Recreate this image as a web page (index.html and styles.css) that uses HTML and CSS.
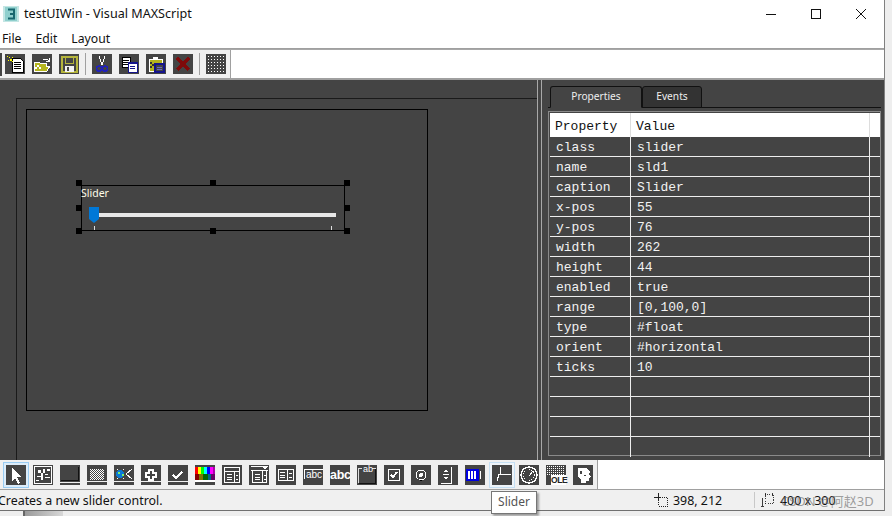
FILE: index.html
```html
<!DOCTYPE html>
<html lang="en">
<head>
    <meta charset="UTF-8">
    <meta name="viewport" content="width=device-width, initial-scale=1.0">
    <title>testUIWin - Visual MAXScript</title>
    <link rel="stylesheet" href="styles.css">
</head>
<body>
    <div class="window">
        <div class="titlebar">
            <svg class="app-icon" viewBox="0 0 16 16"><rect width="16" height="16" fill="#c4e6e4"/><rect x="2" y="1" width="12" height="14" fill="#8fcfcd"/><path d="M5 3.500h6v9H5M7 8h4" fill="none" stroke="#17666e" stroke-width="2"/></svg>
            <span class="title">testUIWin - Visual MAXScript</span>
            <div class="caption-btns">
                <svg viewBox="0 0 10 10"><path d="M0 5h10" stroke="#111" fill="none"/></svg>
                <svg viewBox="0 0 10 10"><rect x=".5" y=".5" width="9" height="9" stroke="#111" fill="none"/></svg>
                <svg viewBox="0 0 10 10" class="smooth"><path d="M0 0l10 10M10 0L0 10" stroke="#111" fill="none"/></svg>
            </div>
        </div>
        <div class="menubar">
            <span>File</span>
            <span>Edit</span>
            <span>Layout</span>
        </div>

        <div class="toolbar">
            <div class="tools top-tools">
                <span class="grip"></span>
                <svg class="tile" viewBox="0 0 20 20"><path d="M8 4h7l3 3v11H7V4z" fill="#fff" stroke="#000"/><path d="M9 8h7M9 10h7M9 12h7M9 14h7" stroke="#000"/><path d="M4 3h1v1H4zM7 3h1v1H7zM5 5h2v2H5zM3 6h1v1H3zM7 7h1v1H7zM2 2h1v1H2z" fill="#ff0"/></svg>
                <svg class="tile" viewBox="0 0 20 20"><path d="M2 17V8h5l1 1h6v3h4l-3 5z" fill="#b5b51e" stroke="#fff"/><path d="M3 13h2v2H3zM5 11h2v2H5zM7 13h2v2H7z" fill="#fff"/><path d="M11 5h4l2 2M17 4v3h-3" fill="none" stroke="#fff"/></svg>
                <svg class="tile" viewBox="0 0 20 20"><path d="M3 3h15v15H3z" fill="none" stroke="#b5b53c" stroke-width="2"/><path d="M6 3h8v6H6z" fill="none" stroke="#b5b53c"/><rect x="6" y="12" width="9" height="6" fill="#f4f4f4"/><rect x="8" y="13" width="2" height="4" fill="#444"/></svg>
                <span class="sep"></span>
                <svg class="tile" viewBox="0 0 20 20"><path d="M7 2l3 9M13 2l-3 9" stroke="#fff" fill="none"/><circle cx="7" cy="14.500" r="2.500" fill="none" stroke="#2222b8" stroke-width="1.500"/><circle cx="13" cy="14.500" r="2.500" fill="none" stroke="#2222b8" stroke-width="1.500"/></svg>
                <svg class="tile" viewBox="0 0 20 20"><path d="M3 3h8v10H3z" fill="#fff" stroke="#000"/><path d="M4 6h6M4 8h6M4 10h6" stroke="#000"/><path d="M9 8h9v10H9z" fill="#fff" stroke="#14148c"/><path d="M9 8h9v2H9z" fill="#14148c"/><path d="M11 12h5M11 14h5" stroke="#14148c"/></svg>
                <svg class="tile" viewBox="0 0 20 20"><path d="M3 5h13v12H3z" fill="#b5b51e" stroke="#fff"/><path d="M7 3h5v3H7z" fill="#fff"/><path d="M4 8h2v2H4zM6 10h2v2H6zM4 12h2v2H4z" fill="#333"/><path d="M9 10h9v8H9z" fill="#444" stroke="#14148c" stroke-width="2"/><path d="M11 13h5M11 15h5" stroke="#6c6cc0"/></svg>
                <svg class="tile" viewBox="0 0 20 20"><path d="M4 4l12 12M16 4L4 16" stroke="#7e0a0a" stroke-width="3" fill="none"/></svg>
                <span class="sep"></span>
                <svg class="tile dots" viewBox="0 0 20 20"><path d="M2 2h16M2 5h16M2 8h16M2 11h16M2 14h16M2 17h16" stroke="#fff" stroke-dasharray="1 2" fill="none"/></svg>
                <span class="sep last"></span>
            </div>
        </div>

        <div class="main">
            <div class="design">
                <div class="canvas">
                    <div class="form">
                        <div class="ctl">
                            <span class="ctl-label">Slider</span>
                            <span class="track"></span>
                            <svg class="thumb" viewBox="0 0 10 16"><path d="M0 0h10v12l-5 4-5-4z" fill="#0078d7"/></svg>
                            <span class="tick tick-a"></span>
                            <span class="tick tick-b"></span>
                            <i class="handle h-tl"></i>
                            <i class="handle h-tm"></i>
                            <i class="handle h-tr"></i>
                            <i class="handle h-ml"></i>
                            <i class="handle h-mr"></i>
                            <i class="handle h-bl"></i>
                            <i class="handle h-bm"></i>
                            <i class="handle h-br"></i>
                        </div>
                    </div>
                </div>
            </div>
            <div class="splitter"></div>
            <div class="side">
                <div class="tabs">
                    <span class="tab active">Properties</span>
                    <span class="tab">Events</span>
                </div>
                <div class="grid-box">
                    <table class="props">
                        <colgroup><col class="c1"><col class="c2"><col class="c3"></colgroup>
                        <thead><tr><th>Property</th><th>Value</th><th></th></tr></thead>
                        <tbody>
                            <tr><td>class</td><td>slider</td><td></td></tr>
                            <tr><td>name</td><td>sld1</td><td></td></tr>
                            <tr><td>caption</td><td>Slider</td><td></td></tr>
                            <tr><td>x-pos</td><td>55</td><td></td></tr>
                            <tr><td>y-pos</td><td>76</td><td></td></tr>
                            <tr><td>width</td><td>262</td><td></td></tr>
                            <tr><td>height</td><td>44</td><td></td></tr>
                            <tr><td>enabled</td><td>true</td><td></td></tr>
                            <tr><td>range</td><td>[0,100,0]</td><td></td></tr>
                            <tr><td>type</td><td>#float</td><td></td></tr>
                            <tr><td>orient</td><td>#horizontal</td><td></td></tr>
                            <tr><td>ticks</td><td>10</td><td></td></tr>
                            <tr><td></td><td></td><td></td></tr>
                            <tr><td></td><td></td><td></td></tr>
                            <tr><td></td><td></td><td></td></tr>
                            <tr class="end"><td></td><td></td><td></td></tr>
                        </tbody>
                    </table>
                </div>
            </div>
        </div>

        <div class="palette">
            <div class="tools bottom-tools">
                <span class="pick"><svg class="tile" viewBox="0 0 20 20"><path d="M6 2v14l3-3 3 6 2-1-3-6h4z" fill="#fff"/></svg></span>
                <svg class="tile" viewBox="0 0 20 20"><rect x="1.500" y="1.500" width="17" height="17" fill="none" stroke="#fff"/><path d="M5 5h3v3H5zM10 4h2v4h-2zM14 4h3v2h-3zM8 8h2v7H8zM4 11h4v1H4zM12 12h5v1h-5zM3 15h3v1H3zM12 9h3v1h-3z" fill="#fff"/></svg>
                <svg class="tile" viewBox="0 0 20 20"><path d="M1 15.500h18" stroke="#111"/><path d="M18.500 2v14" stroke="#111"/><path d="M0 17.500h20" stroke="#f0f0f0"/></svg>
                <svg class="tile" viewBox="0 0 20 20"><path d="M0 16.500h20" stroke="#f0f0f0"/><path d="M3 4h14M3 6h14M3 8h14M3 10h14M3 12h14M3 14h14" stroke="#fff" stroke-dasharray="1 1" fill="none"/><path d="M4 5h14M4 7h14M4 9h14M4 11h14M4 13h14" stroke="#fff" stroke-dasharray="1 1" fill="none"/></svg>
                <svg class="tile" viewBox="0 0 20 20"><path d="M0 16.500h20" stroke="#f0f0f0"/><circle cx="6" cy="9" r="4" fill="#0a7ad6"/><path d="M4 7h2v2H4zM8 9h2v2H8z" fill="#7cf06a"/><path d="M3 4l1 1M10 4l-1 1M3 14l1-1M10 14l-1-1" stroke="#fff"/><path d="M18 4l-6 5 6 5" stroke="#fff" fill="none"/></svg>
                <svg class="tile" viewBox="0 0 20 20"><path d="M0 16.500h20" stroke="#f0f0f0"/><path d="M8 5h4v3h3v4h-3v3H8v-3H5V8h3z" fill="none" stroke="#fff" stroke-width="1.500"/></svg>
                <svg class="tile" viewBox="0 0 20 20"><path d="M0 16.500h20" stroke="#f0f0f0"/><path d="M5 10l3 3 6-6" fill="none" stroke="#fff" stroke-width="2"/></svg>
                <svg class="tile" viewBox="0 0 20 20"><rect y="2" width="3" height="7" fill="#f00"/><rect x="3" y="2" width="3" height="7" fill="#ff0"/><rect x="6" y="2" width="3" height="7" fill="#0f0"/><rect x="9" y="2" width="3" height="7" fill="#0ff"/><rect x="12" y="2" width="3" height="7" fill="#00f"/><rect x="15" y="2" width="3" height="7" fill="#f0f"/><rect x="18" y="2" width="2" height="7" fill="#a0a"/><rect y="9" width="4" height="6" fill="#800"/><rect x="4" y="9" width="4" height="6" fill="#770"/><rect x="8" y="9" width="5" height="6" fill="#060"/><rect x="13" y="9" width="3" height="6" fill="#068"/><rect x="16" y="9" width="4" height="6" fill="#606"/><rect y="15" width="20" height="2" fill="#fff"/></svg>
                <svg class="tile" viewBox="0 0 20 20"><rect x="2.500" y="2.500" width="15" height="15" fill="none" stroke="#fff"/><path d="M3 6.500h14M12.500 7v10M5 9.500h5M5 12.500h5M5 14.500h5M14 10h2M14 14h2" stroke="#fff"/></svg>
                <svg class="tile" viewBox="0 0 20 20"><rect x="3.500" y="5.500" width="14" height="12" fill="none" stroke="#fff"/><path d="M2 1.500h17M2 5.500h17M13.500 6v11M6 9.500h5M6 12.500h5M6 14.500h5M15 10h2M15 14h2" stroke="#fff"/><path d="M14 2h4l-2 3z" fill="#fff"/></svg>
                <svg class="tile" viewBox="0 0 20 20"><rect x="2.500" y="4.500" width="15" height="11" fill="none" stroke="#fff"/><path d="M11.500 5v10M4 7.500h5M4 10.500h5M4 12.500h5M13 8h3M13 12h3" stroke="#fff"/></svg>
                <svg class="tile" viewBox="0 0 20 20"><path d="M1.500 14V4.500H20" fill="none" stroke="#fff"/><text class="tile-text" x="3" y="13" font-size="10">abc</text></svg>
                <span class="tile text-tile bold">abc</span>
                <svg class="tile" viewBox="0 0 20 20"><path d="M1.500 18V3.500H5M15 3.500h3.500" fill="none" stroke="#ddd"/><path d="M2 18.500h17M18.500 4v15" stroke="#111" fill="none"/><text class="tile-text" x="6" y="7" font-size="9">ab</text></svg>
                <svg class="tile" viewBox="0 0 20 20"><rect x="4.500" y="4.500" width="11" height="11" fill="none" stroke="#fff"/><path d="M7 10l2 2 4-5" fill="none" stroke="#fff" stroke-width="2"/></svg>
                <svg class="tile" viewBox="0 0 20 20"><circle cx="10" cy="10" r="5" fill="none" stroke="#fff"/><circle cx="10" cy="10" r="2" fill="#fff"/><path d="M6 14l3 2h3" stroke="#444"/></svg>
                <svg class="tile" viewBox="0 0 20 20"><path d="M13.500 2v16H3" stroke="#fff" fill="none"/><path d="M5.500 7L8 4l2.500 3zM5.500 12L8 15l2.500-3z" fill="#fff"/><path d="M5 9.500h6" stroke="#fff"/></svg>
                <svg class="tile" viewBox="0 0 20 20"><rect x="1" y="4" width="13" height="12" fill="#0000e0"/><path d="M4 6v8M7 6v8M10 6v8M15.500 6v8" stroke="#fff" stroke-width="1.500"/></svg>
                <span class="pick slider-pick"><svg class="tile" viewBox="0 0 20 20"><path d="M5 16l2-7h1V2M8 9h11" fill="none" stroke="#fff"/></svg></span>
                <svg class="tile" viewBox="0 0 20 20"><circle cx="10" cy="10" r="8" fill="none" stroke="#fff" stroke-width="1.500"/><circle cx="10" cy="10" r="5.500" fill="none" stroke="#fff" stroke-dasharray="1 1.500"/><path d="M10 11l4-5" stroke="#fff"/></svg>
                <span class="tile ole"><svg class="ole-dots" viewBox="0 0 20 10"><path d="M1 1h18M1 3h18M1 5h18M1 7h18M1 9h18" stroke="#fff" stroke-dasharray="1 1" fill="none"/></svg><span class="ole-text">OLE</span></span>
                <svg class="tile" viewBox="0 0 20 20"><path d="M5 3h9l3 4-1 2 2 3-2 1v3h-3v2H8v-3L5 12z" fill="#fff"/><path d="M7 6h2v3H7zM11 10h2v1h-2z" fill="#444"/></svg>
                <span class="sep last"></span>
            </div>
        </div>

        <div class="statusbar">
            <span class="status-msg">Creates a new slider control.</span>
            <div class="status-cell pos-cell">
                <svg class="st-icon" viewBox="0 0 14 14"><path d="M0 4.500h7M4.500 0v7" stroke="#222" fill="none"/><path d="M6 4.500h7.500v8.500H4.500V7" stroke="#222" stroke-dasharray="1 1" fill="none"/></svg>
                <span>398, 212</span>
            </div>
            <div class="status-cell size-cell">
                <svg class="st-icon" viewBox="0 0 14 16"><path d="M5 1.500h9V12H5z" stroke="#222" stroke-dasharray="1 1" fill="none"/><path d="M1.500 6v9M0 15.500h4M5 .5v3M13.500 0v3" stroke="#222" fill="none"/></svg>
                <span>400 x 300</span>
            </div>
        </div>
        <span class="watermark">CSDN @阿赵3D</span>
        <span class="tooltip">Slider</span>
    </div>
    <div class="under">
        <span class="under-a"></span>
        <span class="under-b"></span>
        <span class="under-c"></span>
    </div>
</body>
</html>
```

FILE: styles.css
```css
* {
    box-sizing: border-box;
}

html, body {
    margin: 0;
    height: 100%;
    overflow: hidden;
}

body {
    width: 892px;
    height: 516px;
    background: #eeeeee;
    font-family: "Noto Sans", "Open Sans", sans-serif;
    color: #111;
}

.window {
    position: relative;
    width: 885px;
    height: 511px;
    background: #fff;
    border-right: 1px solid #808080;
    border-bottom: 1px solid #707070;
    display: flex;
    flex-direction: column;
}

.titlebar {
    display: flex;
    align-items: center;
    height: 28px;
    padding: 0 0 1px 3px;
}

.app-icon {
    width: 16px;
    height: 16px;
    margin-right: 5px;
}

.title {
    font-size: 12.6px;
}

.caption-btns {
    margin-left: auto;
    display: flex;
    align-items: center;
    gap: 35px;
    padding-right: 18px;
}

.caption-btns svg {
    width: 10px;
    height: 10px;
    shape-rendering: crispEdges;
}

.caption-btns svg.smooth {
    shape-rendering: auto;
}

.menubar {
    display: flex;
    gap: 14px;
    height: 21px;
    padding-left: 2px;
    font-size: 12.2px;
    line-height: 22px;
    border-bottom: 1px solid #a0a0a0;
}

.toolbar {
    height: 31px;
    border-top: 1px solid #a8a8a8;
    border-bottom: 2px solid #a0a0a0;
    background: #fff;
}

.tools {
    display: inline-flex;
    align-items: center;
    height: 100%;
    background: #f0f0f0;
    gap: 7px;
}

.tile {
    display: block;
    flex: none;
    width: 20px;
    height: 20px;
    background: #444;
    shape-rendering: crispEdges;
}

.tile-text {
    fill: #fff;
    font-family: "Liberation Sans", sans-serif;
}

.grip {
    width: 2px;
    height: 23px;
    margin-right: -4px;
    background: #444;
}

.sep {
    width: 1px;
    height: 22px;
    background: #a0a0a0;
    margin: 0 -1px;
}

.sep.last {
    margin: 0 0 0 -3px;
    height: 100%;
}

.main {
    display: flex;
    height: 380px;
    background: #444;
}

.design {
    width: 537px;
    padding-top: 18px;
}

.canvas {
    height: 100%;
    margin-left: 16px;
    padding: 10px 0 0 9px;
    border-top: 1px solid #1a1a1a;
    border-left: 1px solid #1a1a1a;
}

.form {
    position: relative;
    width: 402px;
    height: 302px;
    border: 1px solid #000;
}

/* control sits at its x-pos / y-pos inside the form */
.ctl {
    position: absolute;
    left: 54px;
    top: 75px;
    width: 264px;
    height: 46px;
    border: 1px solid #000;
}

.ctl-label {
    position: absolute;
    left: -1px;
    top: 0;
    font-size: 10.5px;
    line-height: 14px;
    color: #fffde8;
}

.track {
    position: absolute;
    left: 17px;
    top: 27px;
    width: 237px;
    height: 4px;
    background: #e8e8e8;
}

.thumb {
    position: absolute;
    left: 7px;
    top: 21px;
    width: 10px;
    height: 16px;
}

.tick {
    position: absolute;
    top: 40px;
    width: 1px;
    height: 4px;
    background: #ddd;
}

.tick-a {
    left: 12px;
}

.tick-b {
    left: 249px;
}

.handle {
    position: absolute;
    width: 6px;
    height: 6px;
    background: #000;
}

.h-tl { left: -6px; top: -6px; }
.h-tm { left: 128px; top: -6px; }
.h-tr { left: 262px; top: -6px; }
.h-ml { left: -6px; top: 19px; }
.h-mr { left: 262px; top: 19px; }
.h-bl { left: -6px; top: 42px; }
.h-bm { left: 128px; top: 42px; }
.h-br { left: 262px; top: 42px; }

.splitter {
    width: 5px;
    border-left: 1px solid #a8a8a8;
    border-right: 1px solid #a8a8a8;
}

.side {
    flex: 1;
    padding: 6px 3px 3px 6px;
}

.tabs {
    display: flex;
    height: 22px;
    padding-left: 2px;
    border-bottom: 1px solid #111;
}

.tab {
    width: 60px;
    height: 22px;
    border: 1px solid #111;
    border-radius: 3px 3px 0 0;
    background: #333;
    color: #eee;
    font-size: 10.2px;
    line-height: 19px;
    text-align: center;
}

.tab.active {
    width: 92px;
    background: #444;
    border-bottom-color: #444;
}

.grid-box {
    width: 333px;
    height: 345px;
    margin-top: 3px;
    padding: 1px;
    border: 1px solid #8a8a8a;
}

.props {
    width: 330px;
    table-layout: fixed;
    border-collapse: separate;
    border-spacing: 0;
    font-family: "Liberation Mono", monospace;
    font-size: 13px;
    color: #f2f2f2;
}

.c1 {
    width: 81px;
}

.c3 {
    width: 10px;
}

.props th {
    height: 24px;
    padding: 2px 0 0 5px;
    background: #fff;
    color: #111;
    font-weight: normal;
    text-align: left;
    border-right: 1px solid #ddd;
}

.props td {
    height: 20px;
    padding: 3px 0 0 6px;
    line-height: 16px;
    border-bottom: 1px solid #eee;
    border-right: 1px solid #eee;
}

.props th:last-child,
.props td:last-child {
    border-right: none;
}

.props .end td {
    border-bottom: none;
}

.palette {
    height: 30px;
    background: #fff;
    border-bottom: 1px solid #a0a0a0;
}

.bottom-tools {
    padding: 0 0 0 6px;
    background: #f0f0f0;
}

.pick {
    flex: none;
    display: block;
    margin: 0 -3px;
    padding: 2px;
    border: 1px solid #99ccf3;
    background: #dcecf9;
}

.slider-pick {
    border-color: #c4dff4;
    background: #eef4f9;
}

.text-tile {
    color: #fff;
    overflow: hidden;
    text-align: center;
    font-family: "Liberation Sans", sans-serif;
}

.bold {
    font-size: 12.5px;
    font-weight: bold;
    line-height: 20px;
    letter-spacing: -.3px;
}

.ole-dots {
    display: block;
    width: 20px;
    height: 10px;
}

.ole-text {
    display: block;
    margin-left: 5px;
    height: 10px;
    background: #fff;
    color: #222;
    font-family: "Liberation Sans", sans-serif;
    font-size: 8.5px;
    font-weight: bold;
    line-height: 10px;
    letter-spacing: -.4px;
    text-align: center;
}

.statusbar {
    flex: 1;
    display: flex;
    align-items: center;
    background: #f0f0f0;
    font-size: 12.4px;
}

.status-msg {
    margin-left: -2px;
    width: 641px;
    flex: none;
}

.status-cell {
    display: flex;
    align-items: center;
    gap: 5px;
}

.pos-cell {
    margin-left: 15px;
    width: 101px;
    height: 16px;
    border-right: 1px solid #c8c8c8;
}

.size-cell {
    margin-left: 5px;
    gap: 6px;
}

.st-icon {
    width: 14px;
    height: 14px;
    shape-rendering: crispEdges;
}

.watermark {
    position: absolute;
    left: 781px;
    top: 491px;
    color: rgba(110, 110, 110, .65);
    font-family: "Noto Sans", "Noto Sans CJK SC", sans-serif;
    font-size: 13px;
    white-space: nowrap;
}

.tooltip {
    position: absolute;
    left: 491px;
    top: 491px;
    width: 46px;
    height: 23px;
    border: 1px solid #767676;
    background: #fff;
    color: #555;
    font-size: 12px;
    line-height: 20px;
    text-align: center;
    box-shadow: 2px 2px 2px rgba(0, 0, 0, .35);
}

.under {
    display: flex;
    height: 5px;
}

.under-a {
    width: 23px;
}

.under-b {
    width: 2px;
    background: #666;
}

.under-c {
    width: 38px;
    background: linear-gradient(90deg, #9a9a9a, #d8d8d8);
}
```
